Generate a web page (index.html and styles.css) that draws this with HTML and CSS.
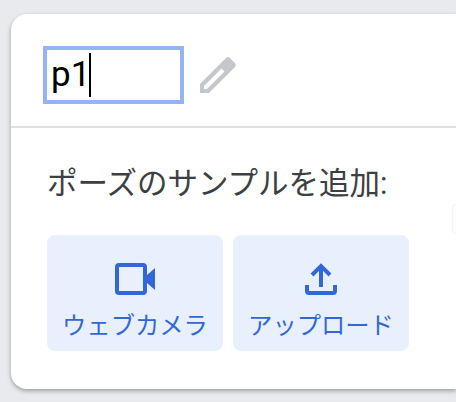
FILE: index.html
```html
<!DOCTYPE html>
<html lang="ja">
<head>
    <meta charset="UTF-8">
    <title>p1</title>
    <link rel="stylesheet" href="styles.css">
</head>
<body>
    <div class="card">
        <div class="card-header">
            <div class="name-box"><span>p1</span><i class="caret"></i></div>
            <svg class="edit-icon" viewBox="0 0 38 38" width="38" height="38">
                <path d="M1 37V28L27 2a3 3 0 0 1 4 0l5 5a3 3 0 0 1 0 4L10 37ZM5 33h3L25.500 15.500 22.500 12.500 5 30Z" fill="#c4c7cb" fill-rule="evenodd"/>
            </svg>
        </div>
        <div class="card-body">
            <div class="title">ポーズのサンプルを追加:</div>
            <div class="buttons">
                <div class="sample-btn">
                    <svg viewBox="0 0 40 32" width="40" height="32">
                        <rect x="2" y="2" width="28" height="28" rx="2" fill="none" stroke="#3367d6" stroke-width="4"/>
                        <path d="M32 12 40 5V27L32 20Z" fill="#3367d6"/>
                    </svg>
                    <span>ウェブカメラ</span>
                </div>
                <div class="sample-btn">
                    <svg viewBox="0 0 40 32" width="40" height="32">
                        <path d="M20 24V3M11 12 20 3 29 12" fill="none" stroke="#3367d6" stroke-width="4"/>
                        <path d="M6 22v6a2 2 0 0 0 2 2h24a2 2 0 0 0 2-2v-6" fill="none" stroke="#3367d6" stroke-width="4"/>
                    </svg>
                    <span>アップロード</span>
                </div>
            </div>
        </div>
    </div>
    <div class="side-tab"></div>
</body>
</html>
```
FILE: styles.css
```css
html, body {
    margin: 0;
    height: 402px;
    overflow: hidden;
}
body {
    background-color: #e8eaed;
    font-family: Roboto, "Noto Sans CJK JP", sans-serif;
    padding: 14px 0 0 11px;
    box-sizing: border-box;
}
.card {
    height: 375px;
    background-color: white;
    border-radius: 16px 0 0 16px;
    box-shadow: 0 2px 4px rgba(60, 64, 67, 0.45);
}
.card-header {
    height: 103px;
    padding-top: 9px;
    border-bottom: 2px solid #e0e0e0;
    padding-left: 32px;
    display: flex;
    align-items: center;
    gap: 15px;
}
.name-box {
    width: 129px;
    height: 50px;
    border: 4px solid #94b4f4;
    display: flex;
    align-items: center;
    padding-left: 4px;
    font-size: 35px;
    color: #000;
}
.caret {
    width: 2px;
    height: 44px;
    background-color: #000;
    margin-left: -1px;
}
.card-body {
    padding: 36px 0 0 36px;
}
.title {
    font-size: 30.5px;
    line-height: 40px;
    color: #3c4043;
}
.buttons {
    display: flex;
    gap: 10px;
    margin-top: 31px;
}
.sample-btn {
    width: 176px;
    height: 116px;
    background-color: #e8f0fe;
    border-radius: 8px;
    display: flex;
    flex-direction: column;
    align-items: center;
    padding-top: 28px;
    box-sizing: border-box;
    color: #3367d6;
    font-size: 24.3px;
}
.sample-btn span {
    margin-top: 16px;
    line-height: 30px;
}
.side-tab {
    position: absolute;
    left: 453px;
    top: 205px;
    width: 10px;
    height: 28px;
    background-color: white;
    border-radius: 4px;
    box-shadow: 0 0 2px rgba(60, 64, 67, 0.2);
}
```
